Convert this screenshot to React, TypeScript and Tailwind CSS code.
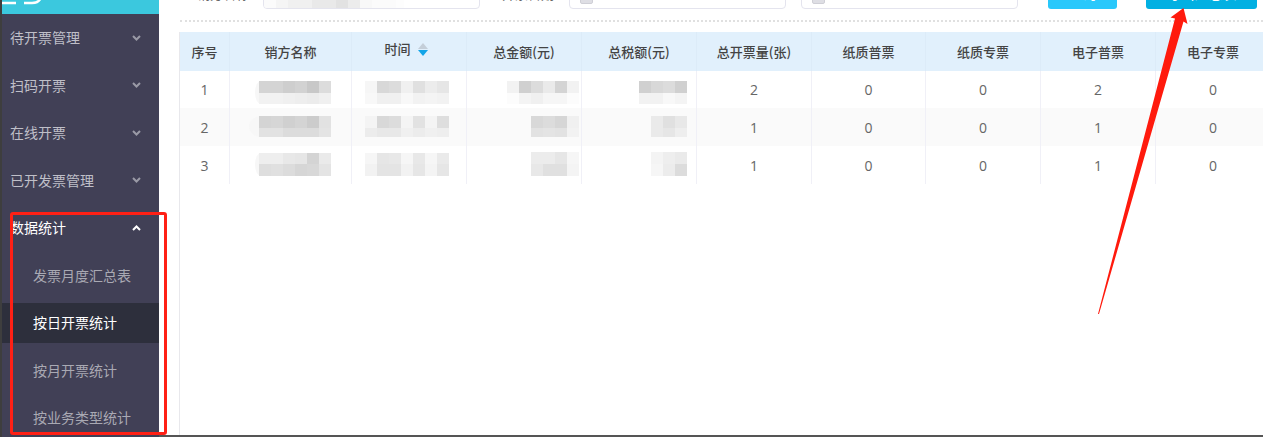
const FONT = "font-['Noto_Sans_CJK_SC','Noto_Sans',sans-serif]";

type MosaicProps = { top: string[]; bottom: string[]; h1: number; h2: number; lead?: number; className: string };

function Mosaic({ top, bottom, h1, h2, lead = 0, className }: MosaicProps) {
  const cell = 12;
  const w = top.length * cell + lead;
  return (
    <svg width={w} height={h1 + h2} className={className}>
      {lead > 0 && <ellipse cx={lead + 2} cy={(h1 + h2) / 2} rx={lead} ry={(h1 + h2) / 2} fill="#f7f7f7" />}
      {top.map((c, i) => (
        <rect key={i} x={lead + i * cell} y={0} width={cell} height={h1} fill={`#${c}`} />
      ))}
      {bottom.map((c, i) => (
        <rect key={i} x={lead + i * cell} y={h1} width={cell} height={h2} fill={`#${c}`} />
      ))}
    </svg>
  );
}

function Chevron({ up = false }: { up?: boolean }) {
  return (
    <svg width="9" height="6" viewBox="0 0 9 6" className={up ? "text-white" : "text-[#9a9aa6]"}>
      <polyline
        points={up ? "1,5 4.5,1.5 8,5" : "1,1 4.5,4.5 8,1"}
        fill="none"
        stroke="currentColor"
        strokeWidth="2"
      />
    </svg>
  );
}

const topMenu = ["待开票管理", "扫码开票", "在线开票", "已开发票管理"];
const subMenu = ["发票月度汇总表", "按日开票统计", "按月开票统计", "按业务类型统计"];

function Sidebar() {
  return (
    <aside className="w-[157px] shrink-0 bg-[#414056] overflow-hidden">
      <div className="h-[14px] bg-[#3bc8de] overflow-hidden">
        <svg width="48" height="14" viewBox="0 0 48 14">
          <path d="M-2 -4 V3 H14" fill="none" stroke="#fff" strokeWidth="2.4" />
          <path d="M22 3 H30 C35 3 38 1 39 -3" fill="none" stroke="#fff" strokeWidth="2.4" />
        </svg>
      </div>
      {topMenu.map((t) => (
        <div key={t} className="h-[47.5px] pl-[8px] pr-[18px] flex items-center justify-between text-[14px] text-[#bfbfc8]">
          <span>{t}</span>
          <Chevron />
        </div>
      ))}
      <div className="h-[47.5px] pl-[8px] pr-[18px] flex items-center justify-between text-[14px] text-white">
        <span>数据统计</span>
        <Chevron up />
      </div>
      <div className="mt-[4px] flex flex-col gap-[7.5px]">
        {subMenu.map((t, i) => (
          <div
            key={t}
            className={
              i === 1
                ? "h-10 pl-[31px] pb-[1px] flex items-center text-[14px] text-white bg-[#2d2f3c]"
                : "h-10 pl-[31px] pb-[1px] flex items-center text-[14px] text-[#a9a9b3]"
            }
          >
            {t}
          </div>
        ))}
      </div>
    </aside>
  );
}

function FilterInput({ children, className }: { children?: React.ReactNode; className: string }) {
  return (
    <div className={`h-[30px] w-[217px] border border-[#e4e4ee] rounded-[4px] bg-white overflow-hidden flex items-end ${className}`}>
      {children}
    </div>
  );
}

function InputIcon() {
  return <div className="w-[13px] h-[16px] mb-[4px] ml-[10px] bg-[#dedee4] border border-[#cfcfd6] rounded-[2px]" />;
}

function Filters() {
  return (
    <div className="-mt-[21px] h-[30px] pl-[38px] flex items-center text-[13px]">
      <span className="w-[66px] shrink-0 text-[#666]">销方名称</span>
      <FilterInput className="shrink-0">
        <svg width="140" height="30" className="shrink-0">
          {["fbfbfb", "f5f5f5", "f0f0f0", "f0f0f0", "e9e9e9", "e9e9e9", "e2e2e2", "ececec", "f8f8f8", "fbfbfb", "fbfbfb", "fdfdfd"].map((c, i) => (
            <rect key={i} x={i * 12} y={0} width={12} height={30} fill={`#${c}`} />
          ))}
        </svg>
      </FilterInput>
      <span className="ml-[22px] w-[67px] shrink-0 text-[#666]">开票日期</span>
      <FilterInput className="shrink-0">
        <InputIcon />
      </FilterInput>
      <FilterInput className="ml-[15px] shrink-0">
        <InputIcon />
      </FilterInput>
      <button className="ml-[30px] w-[69px] h-[30px] pb-[2px] shrink-0 rounded-[3px] bg-[#29c8fb] text-white text-[14px]">查询</button>
      <button className="ml-[29px] w-[111px] h-[30px] pb-[2px] shrink-0 rounded-[3px] bg-[#02b0e2] text-white text-[14px]">导出汇总表</button>
    </div>
  );
}

const GRID = "grid grid-cols-[50px_122px_115px_115px_115px_115px_114px_115px_115px_115px]";
const heads = ["序号", "销方名称", "时间", "总金额(元)", "总税额(元)", "总开票量(张)", "纸质普票", "纸质专票", "电子普票", "电子专票"];

const rows = [
  {
    no: "1",
    rowClass: "h-[37px] bg-white",
    vals: ["2", "0", "0", "2", "0"],
    name: { top: ["d4d4d4", "d4d4d4", "cecece", "d2d2d2", "c8c8c8", "dcdcdc"], bottom: ["f2f2f2", "f2f2f2", "f0f0f0", "eeeeee", "ececec", "f0f0f0"], h1: 12, h2: 11, lead: 6, cls: "mt-[10px]" },
    time: { top: ["f6f6f6", "d8d8d8", "dcdcdc", "f0f0f0", "e0e0e0", "ececec", "e6e6e6"], bottom: ["f8f8f8", "f0f0f0", "f0f0f0", "f8f8f8", "f2f2f2", "f4f4f4", "f2f2f2"], h1: 12, h2: 11, cls: "mt-[10px]" },
    amount: { top: ["f2f2f2", "d0d0d0", "dcdcdc", "eaeaea", "d4d4d4", "f2f2f2"], bottom: ["fcfcfc", "f4f4f4", "f0f0f0", "f6f6f6", "f6f6f6", "fcfcfc"], h1: 12, h2: 11, cls: "mt-[10px]" },
    tax: { top: ["d0d0d0", "d8d8d8", "dcdcdc", "d0d0d0"], bottom: ["f2f2f2", "f2f2f2", "f8f8f8", "f4f4f4"], h1: 12, h2: 11, cls: "mt-[10px]" },
  },
  {
    no: "2",
    rowClass: "h-[38px] bg-[#fafafa]",
    vals: ["1", "0", "0", "1", "0"],
    name: { top: ["d4d4d4", "d6d6d6", "d0d0d0", "d4d4d4", "cccccc", "e2e2e2"], bottom: ["e2e2e2", "e2e2e2", "dcdcdc", "dcdcdc", "dcdcdc", "e4e4e4"], h1: 12, h2: 9, lead: 12, cls: "mt-[8px]" },
    time: { top: ["f4f4f4", "d8d8d8", "dcdcdc", "f4f4f4", "e2e2e2", "f4f4f4", "dedede"], bottom: ["ececec", "e8e8e8", "e8e8e8", "f0f0f0", "ececec", "f0f0f0", "eeeeee"], h1: 12, h2: 9, cls: "mt-[8px]" },
    amount: { top: ["d8d8d8", "dcdcdc", "d6d6d6", "f0f0f0"], bottom: ["e2e2e2", "e4e4e4", "e2e2e2", "f2f2f2"], h1: 12, h2: 9, cls: "mt-[8px]" },
    tax: { top: ["eaeaea", "e0e0e0", "e8e8e8"], bottom: ["eaeaea", "e6e6e6", "eeeeee"], h1: 12, h2: 9, cls: "mt-[8px]" },
  },
  {
    no: "3",
    rowClass: "h-[38px] bg-white",
    vals: ["1", "0", "0", "1", "0"],
    name: { top: ["eeeeee", "eeeeee", "e8e8e8", "e6e6e6", "d4d4d4", "eaeaea"], bottom: ["dedede", "e0e0e0", "dcdcdc", "d6d6d6", "d8d8d8", "e4e4e4"], h1: 11, h2: 12, lead: 6, cls: "mt-[7px]" },
    time: { top: ["f6f6f6", "e6e6e6", "e8e8e8", "f6f6f6", "e8e8e8", "f6f6f6", "eaeaea"], bottom: ["f2f2f2", "e4e4e4", "e4e4e4", "f2f2f2", "e6e6e6", "f4f4f4", "e6e6e6"], h1: 11, h2: 12, cls: "mt-[7px]" },
    amount: { top: ["ececec", "ececec", "e6e6e6", "f6f6f6"], bottom: ["e8e8e8", "e0e0e0", "e0e0e0", "f4f4f4"], h1: 12, h2: 12, cls: "mt-[6px]" },
    tax: { top: ["f4f4f4", "eeeeee", "eaeaea"], bottom: ["f6f6f6", "ececec", "dcdcdc"], h1: 12, h2: 12, cls: "mt-[6px]" },
  },
];

function SortIcon() {
  return (
    <svg width="10" height="13" viewBox="0 0 10 13" className="ml-[7px]">
      <polygon points="5,0 10,6 0,6" fill="#c4ced8" />
      <polygon points="0,7 10,7 5,13" fill="#12a5e8" />
    </svg>
  );
}

const BODY_CELL = "border-r border-[#f0f0f7] flex items-center justify-center";
const BLUR_CELL = "border-r border-[#f0f0f7] flex items-start justify-end";

function StatsTable() {
  return (
    <div className="mt-[10px] flex-1 border-l border-[#e8e8ec]">
      <div className={`${GRID} h-[39px] bg-[#e1f0fc] text-[13px] text-[#444] font-medium`}>
        {heads.map((h, i) =>
          i === 2 ? (
            <div key={h} className="border-r border-[#dcebf8] flex items-center justify-center pr-[6px] pb-[5px]">
              <span>{h}</span>
              <SortIcon />
            </div>
          ) : (
            <div key={h} className="border-r border-[#dcebf8] flex items-center justify-center">
              {h}
            </div>
          ),
        )}
      </div>
      {rows.map((r) => (
        <div key={r.no} className={`${GRID} ${r.rowClass} text-[14px] text-[#666] font-['Open_Sans',sans-serif]`}>
          <div className={BODY_CELL}>{r.no}</div>
          <div className={`${BLUR_CELL} pr-[20px]`}>
            <Mosaic top={r.name.top} bottom={r.name.bottom} h1={r.name.h1} h2={r.name.h2} lead={r.name.lead} className={r.name.cls} />
          </div>
          <div className={`${BLUR_CELL} pr-[17px]`}>
            <Mosaic top={r.time.top} bottom={r.time.bottom} h1={r.time.h1} h2={r.time.h2} className={r.time.cls} />
          </div>
          <div className={`${BLUR_CELL} pr-[2px]`}>
            <Mosaic top={r.amount.top} bottom={r.amount.bottom} h1={r.amount.h1} h2={r.amount.h2} className={r.amount.cls} />
          </div>
          <div className={`${BLUR_CELL} pr-[9px]`}>
            <Mosaic top={r.tax.top} bottom={r.tax.bottom} h1={r.tax.h1} h2={r.tax.h2} className={r.tax.cls} />
          </div>
          {r.vals.map((v, i) => (
            <div key={i} className={BODY_CELL}>
              {v}
            </div>
          ))}
        </div>
      ))}
    </div>
  );
}

export default function App() {
  return (
    <div className={`relative w-[1263px] h-[437px] overflow-hidden flex bg-white ${FONT}`}>
      <div className="w-[2px] shrink-0 bg-[#3e3e3e]" />
      <Sidebar />
      <main className="flex-1 min-w-0 flex flex-col border-b-2 border-[#555] overflow-hidden">
        <Filters />
        <div className="ml-[21px] mt-[11px] h-[2px] border-t-2 border-dotted border-[#e0e0e0]" />
        <div className="flex-1 pl-[20px] flex flex-col min-h-0">
          <StatsTable />
        </div>
      </main>

      {/* red annotation box */}
      <div className="absolute left-[10px] top-[212px] w-[157px] h-[223px] border-[3px] border-[#ff2015] rounded-[3px]" />
      {/* red annotation arrow */}
      <svg className="absolute left-0 top-0 pointer-events-none" width="1263" height="437">
        <polygon points="1183.5,8 1187.5,24 1183.5,21.5 1099,314 1098,314 1175,18.5 1170.5,17.5" fill="#ff1a0d" />
      </svg>
    </div>
  );
}
